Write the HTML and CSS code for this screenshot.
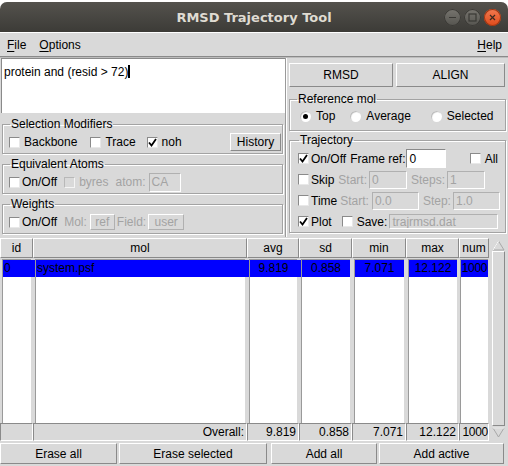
FILE: index.html
```html
<!DOCTYPE html>
<html>
<head>
<meta charset="utf-8">
<link rel="stylesheet" href="styles.css">
</head>
<body>
<div class="window">
  <div class="titlebar">
    <span class="title">RMSD Trajectory Tool</span>
    <div class="wbtns">
      <span class="wb wb-min"><svg width="17" height="17" viewBox="0 0 17 17"><line x1="5" y1="8.5" x2="12" y2="8.5" stroke="#3a3935" stroke-width="1.2"/></svg></span>
      <span class="wb wb-max"><svg width="17" height="17" viewBox="0 0 17 17"><rect x="5" y="5" width="7" height="7" fill="none" stroke="#3a3935" stroke-width="1.2"/></svg></span>
      <span class="wb wb-close"><svg width="17" height="17" viewBox="0 0 17 17"><path d="M6 6 L11 11 M11 6 L6 11" stroke="#3a2a20" stroke-width="1.2"/></svg></span>
    </div>
  </div>
  <div class="menubar">
    <span class="mi"><u>F</u>ile</span>
    <span class="mi"><u>O</u>ptions</span>
    <span class="mi help"><u>H</u>elp</span>
  </div>
  <div class="top">
    <div class="left">
      <div class="seltext">protein and (resid &gt; 72)<span class="caret"></span></div>
      <fieldset class="lf lf-sm">
        <legend>Selection Modifiers</legend>
        <div class="row">
          <span class="cb"></span><span class="lbl l-bb">Backbone</span>
          <span class="cb"></span><span class="lbl l-tr">Trace</span>
          <span class="cb on"><svg width="9" height="9" viewBox="0 0 9 9"><path d="M1 4.5 L3.5 7.5 L8 1" fill="none" stroke="#000" stroke-width="1.8"/></svg></span><span class="lbl">noh</span>
          <span class="spacer"></span>
          <span class="btn btn-hist">History</span>
        </div>
      </fieldset>
      <fieldset class="lf lf-ea">
        <legend>Equivalent Atoms</legend>
        <div class="row">
          <span class="cb cb-tight"></span><span class="lbl l-onoff">On/Off</span>
          <span class="cb dis"></span><span class="lbl dtext l-byres">byres</span>
          <span class="lbl dtext l-atom">atom:</span>
          <span class="entry dis e-ca">CA</span>
        </div>
      </fieldset>
      <fieldset class="lf lf-w">
        <legend>Weights</legend>
        <div class="row">
          <span class="cb cb-tight"></span><span class="lbl l-onoff">On/Off</span>
          <span class="lbl dtext">Mol:</span>
          <span class="btn dbtn b-ref">ref</span>
          <span class="lbl dtext">Field:</span>
          <span class="btn dbtn b-user">user</span>
        </div>
      </fieldset>
    </div>
    <div class="right">
      <div class="actions">
        <span class="btn big b-rmsd">RMSD</span>
        <span class="btn big b-align">ALIGN</span>
      </div>
      <fieldset class="lf lf-ref">
        <legend>Reference mol</legend>
        <div class="row">
          <span class="rb on"></span><span class="lbl l-top">Top</span>
          <span class="rb"></span><span class="lbl l-avg">Average</span>
          <span class="rb"></span><span class="lbl">Selected</span>
        </div>
      </fieldset>
      <fieldset class="lf lf-traj">
        <legend>Trajectory</legend>
        <div class="row trow">
          <span class="cb cb-tight on"><svg width="9" height="9" viewBox="0 0 9 9"><path d="M1 4.5 L3.5 7.5 L8 1" fill="none" stroke="#000" stroke-width="1.8"/></svg></span><span class="lbl l-onoff2">On/Off</span>
          <span class="lbl">Frame ref:</span>
          <span class="entry e-fr">0</span>
          <span class="spacer"></span>
          <span class="cb"></span><span class="lbl">All</span>
        </div>
        <div class="row trow">
          <span class="cb cb-tight"></span><span class="lbl l-skip">Skip</span>
          <span class="lbl dtext">Start:</span>
          <span class="entry dis e-s1">0</span>
          <span class="lbl dtext">Steps:</span>
          <span class="entry dis e-s2">1</span>
        </div>
        <div class="row trow">
          <span class="cb cb-tight"></span><span class="lbl l-time">Time</span>
          <span class="lbl dtext">Start:</span>
          <span class="entry dis e-t1">0.0</span>
          <span class="lbl dtext">Step:</span>
          <span class="entry dis e-t2">1.0</span>
        </div>
        <div class="row trow">
          <span class="cb cb-tight on"><svg width="9" height="9" viewBox="0 0 9 9"><path d="M1 4.5 L3.5 7.5 L8 1" fill="none" stroke="#000" stroke-width="1.8"/></svg></span><span class="lbl l-plot">Plot</span>
          <span class="cb"></span><span class="lbl">Save:</span>
          <span class="entry dis e-save">trajrmsd.dat</span>
        </div>
      </fieldset>
    </div>
  </div>
  <div class="table">
    <div class="col c-id">
      <div class="th">id</div>
      <div class="lb"><div class="sel left">0</div></div>
      <div class="ft"></div>
    </div>
    <div class="col c-mol">
      <div class="th">mol</div>
      <div class="lb"><div class="sel left">system.psf</div></div>
      <div class="ft">Overall:</div>
    </div>
    <div class="col">
      <div class="th">avg</div>
      <div class="lb"><div class="sel">9.819</div></div>
      <div class="ft">9.819</div>
    </div>
    <div class="col">
      <div class="th">sd</div>
      <div class="lb"><div class="sel">0.858</div></div>
      <div class="ft">0.858</div>
    </div>
    <div class="col">
      <div class="th">min</div>
      <div class="lb"><div class="sel">7.071</div></div>
      <div class="ft">7.071</div>
    </div>
    <div class="col">
      <div class="th">max</div>
      <div class="lb"><div class="sel">12.122</div></div>
      <div class="ft">12.122</div>
    </div>
    <div class="col c-num">
      <div class="th">num</div>
      <div class="lb"><div class="sel">1000</div></div>
      <div class="ft">1000</div>
    </div>
    <div class="scroll">
      <span class="arrow"><svg width="13" height="11" viewBox="0 0 13 11"><path d="M6.5 1 L12 10 L1 10 Z" fill="#d9d9d9" stroke="#a8a8a8"/><path d="M6.5 1 L1 10" stroke="#fff"/></svg></span>
      <span class="thumb"></span>
      <span class="arrow"><svg width="13" height="11" viewBox="0 0 13 11"><path d="M6.5 10 L12 1 L1 1 Z" fill="#d9d9d9" stroke="#a8a8a8"/><path d="M1 1 L12 1" stroke="#fff"/></svg></span>
    </div>
  </div>
  <div class="bottom">
    <span class="btn bb b1">Erase all</span>
    <span class="btn bb b2">Erase selected</span>
    <span class="btn bb b3">Add all</span>
    <span class="btn bb b4">Add active</span>
  </div>
</div>
</body>
</html>
```

FILE: styles.css
```css
html, body {
  margin: 0;
  padding: 0;
  background: #ffffff;
}
body {
  width: 508px;
  height: 466px;
  overflow: hidden;
  font-family: "Liberation Sans", Arial, sans-serif;
  font-size: 12px;
  color: #000;
}
.window {
  width: 508px;
  height: 466px;
  background: #d9d9d9;
  display: flex;
  flex-direction: column;
  border-radius: 7px 7px 0 0;
  overflow: hidden;
  margin-top: 2px;
}
.titlebar {
  height: 30px;
  flex: none;
  background: linear-gradient(#54524d, #3c3b37);
  display: flex;
  align-items: center;
  justify-content: center;
  position: relative;
}
.title {
  font-family: "DejaVu Sans", sans-serif;
  font-weight: bold;
  font-size: 13px;
  color: #dfdbd2;
}
.wbtns {
  position: absolute;
  right: 7px;
  top: 7px;
  display: flex;
  gap: 3px;
}
.wb {
  width: 17px;
  height: 17px;
  border-radius: 50%;
  display: block;
  background: linear-gradient(#77756f, #55544f);
  box-shadow: inset 0 0 0 1px #3a3935;
}
.wb svg { display: block; }
.wb-close {
  background: linear-gradient(#f27a50, #df4a1a);
  box-shadow: inset 0 0 0 1px #9c3614;
}
.menubar {
  height: 25px;
  flex: none;
  display: flex;
  align-items: center;
  box-sizing: border-box;
  padding: 1px 6px 0 7px;
  border-top: 1px solid #ffffff;
  border-bottom: 1px solid #8a8a8a;
  box-shadow: 0 1px 0 #bdbdbd;
  gap: 13px;
}
.mi u { text-decoration: underline; text-underline-offset: 2px; }
.help { margin-left: auto; }
.top {
  flex: none;
  height: 179px;
  margin-top: 1px;
  display: flex;
}
.left {
  width: 285px;
  flex: none;
  display: flex;
  flex-direction: column;
  border-right: 1px solid #9a9a9a;
  box-shadow: 1px 0 0 #ffffff;
}
.seltext {
  height: 55px;
  background: #ffffff;
  margin: 0 0 0 1px;
  padding: 6px 0 0 2px;
  box-sizing: border-box;
  border-top: 1px solid #8a8a8a;
  border-left: 1px solid #8a8a8a;
  line-height: 14px;
}
.caret {
  display: inline-block;
  width: 2px;
  height: 13px;
  background: #000;
  vertical-align: -2px;
}
.lf {
  margin: 0 2px 0 2px;
  padding: 0 1px 0 6px;
  border: 1px solid #a3a3a3;
  box-shadow: 1px 1px 0 #ffffff, inset 1px 1px 0 #ffffff;
  min-width: 0;
}
.lf legend {
  padding: 0 1px;
  margin-left: 1px;
  line-height: 14px;
  height: 14px;
}
.row {
  display: flex;
  align-items: center;
  height: 18px;
}
.spacer { flex: 1; }
.lf-sm { margin-top: 4px; height: 37px; box-sizing: border-box; padding-top: 2px; }
.lf-ea { margin-top: 3px; height: 37px; box-sizing: border-box; padding-top: 2px; }
.lf-w { margin-top: 3px; height: 37px; box-sizing: border-box; padding-top: 2px; }
.cb {
  width: 11px;
  height: 11px;
  box-sizing: border-box;
  background: #ffffff;
  border-top: 1px solid #8a8a8a;
  border-left: 1px solid #8a8a8a;
  border-right: 1px solid #e8e8e8;
  border-bottom: 1px solid #e8e8e8;
  margin-right: 4px;
  flex: none;
  display: flex;
  align-items: center;
  justify-content: center;
}
.cb.cb-tight { margin-right: 2px; }
.cb svg { display: block; }
.cb.dis {
  background: #d9d9d9;
  border-top-color: #b8b8b8;
  border-left-color: #b8b8b8;
  border-right-color: #f4f4f4;
  border-bottom-color: #f4f4f4;
}
.lbl { white-space: nowrap; }
.dtext { color: #a3a3a3; }
.l-bb { margin-right: 13px; }
.l-tr { margin-right: 11px; }
.l-onoff { margin-right: 7px; }
.l-byres { margin-right: 7px; }
.l-atom { margin-right: 3px; }
.btn {
  display: flex;
  align-items: center;
  justify-content: center;
  box-sizing: border-box;
  background: #d9d9d9;
  border-top: 1px solid #ffffff;
  border-left: 1px solid #ffffff;
  border-right: 1px solid #8a8a8a;
  border-bottom: 1px solid #8a8a8a;
  white-space: nowrap;
}
.btn-hist { width: 51px; height: 18px; }
.entry {
  box-sizing: border-box;
  height: 19px;
  background: #ffffff;
  border-top: 1px solid #8a8a8a;
  border-left: 1px solid #8a8a8a;
  border-right: 1px solid #ffffff;
  border-bottom: 1px solid #ffffff;
  padding-left: 2px;
  display: flex;
  align-items: center;
  white-space: nowrap;
  overflow: hidden;
}
.entry.dis {
  background: #d9d9d9;
  color: #a3a3a3;
  border-top-color: #b0b0b0;
  border-left-color: #b0b0b0;
}
.e-ca { width: 32px; }
.dbtn { color: #a3a3a3; height: 16px; border-right-color: #b0b0b0; border-bottom-color: #b0b0b0; }
.b-ref { width: 25px; margin: 0 2px 0 3px; }
.b-user { width: 36px; margin-left: 2px; }
.right {
  flex: 1;
  display: flex;
  flex-direction: column;
  padding-left: 1px;
}
.actions {
  display: flex;
  gap: 3px;
  margin: 5px 3px 0 2px;
  height: 24px;
}
.big { flex: 1; height: 24px; }
.b-rmsd { flex: 0 0 104px; }
.lf-ref { margin-top: 5px; height: 39px; box-sizing: border-box; padding-top: 1px; }
.rb {
  width: 11px;
  height: 11px;
  border-radius: 50%;
  background: #ffffff;
  box-shadow: inset 1px 1px 1px #b8b8b8;
  margin: 0 5px 0 4px;
  flex: none;
  position: relative;
}
.rb.on::after {
  content: "";
  position: absolute;
  left: 3px;
  top: 3px;
  width: 5px;
  height: 5px;
  border-radius: 50%;
  background: #000;
}
.l-top { margin-right: 11px; }
.l-avg { margin-right: 16px; }
.lf-traj { margin-top: 2px; height: 100px; box-sizing: border-box; padding-top: 1px; padding-left: 8px; padding-right: 4px; }
.trow { height: 21px; }
.trow .lbl { margin-right: 3px; }
.l-onoff2 { margin-right: 4px !important; }
.e-fr { width: 40px; height: 19px; margin-left: -2px; }
.l-skip { margin-right: 4px !important; }
.e-s1 { width: 38px; margin-right: 4px; height: 18px; margin-left: -1px; }
.e-s2 { width: 38px; height: 18px; margin-left: -1px; }
.e-t1 { width: 47px; margin-right: 4px; height: 18px; }
.e-t2 { width: 47px; height: 18px; margin-left: -1px; }
.l-plot { margin-right: 10px !important; }
.e-save { width: 109px; height: 15px; margin-left: -1px; }
.table {
  flex: none;
  height: 203px;
  margin-top: 1px;
  display: grid;
  grid-template-columns: 33px 214px 52px 53px 54px 53px 30px 17px;
}
.col {
  display: flex;
  flex-direction: column;
  min-width: 0;
}
.th {
  height: 20px;
  box-sizing: border-box;
  border-top: 1px solid #ffffff;
  border-left: 1px solid #ffffff;
  border-right: 1px solid #8a8a8a;
  border-bottom: 1px solid #8a8a8a;
  display: flex;
  align-items: center;
  justify-content: center;
}
.lb {
  flex: 1;
  background: #ffffff;
  margin: 1px 2px 0 2px;
  border-left: 1px solid #9a9a9a;
  border-top: 1px solid #9a9a9a;
}
.c-num .lb { margin: 1px 1px 0 1px; }
.sel {
  background: #0000ff;
  color: #000;
  height: 17px;
  line-height: 17px;
  text-align: center;
  white-space: nowrap;
  overflow: hidden;
}
.c-num .sel { letter-spacing: -0.3px; }
.sel.left { text-align: left; padding-left: 1px; }
.ft {
  height: 18px;
  box-sizing: border-box;
  border-top: 1px solid #8a8a8a;
  border-left: 1px solid #8a8a8a;
  border-right: 1px solid #ffffff;
  border-bottom: 1px solid #ffffff;
  display: flex;
  align-items: center;
  justify-content: flex-end;
  padding-right: 2px;
  white-space: nowrap;
  overflow: hidden;
}
.c-num .ft { padding-right: 0; letter-spacing: -0.3px; }
.scroll {
  display: flex;
  flex-direction: column;
  align-items: center;
  padding: 2px 0 3px;
  margin-left: 1px;
}
.arrow { height: 11px; display: block; }
.arrow svg { display: block; }
.thumb {
  flex: 1;
  width: 13px;
  box-sizing: border-box;
  border-top: 1px solid #ffffff;
  border-left: 1px solid #ffffff;
  border-right: 1px solid #8a8a8a;
  border-bottom: 1px solid #8a8a8a;
  margin: 0 0 1px;
}
.bottom {
  display: flex;
  margin-top: 2px;
  height: 21px;
}
.bb { height: 21px; }
.b1 { width: 117px; }
.b2 { width: 148px; margin-left: 2px; }
.b3 { width: 106px; margin-left: 4px; }
.b4 { width: 125px; margin-left: 2px; }
```
